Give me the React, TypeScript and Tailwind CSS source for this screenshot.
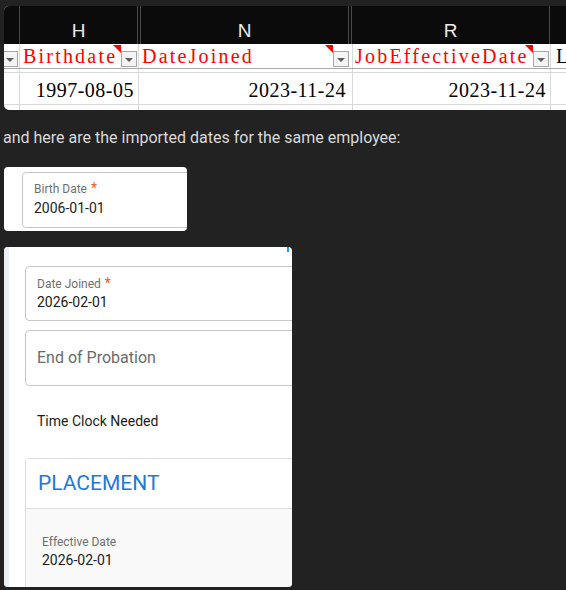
import React from "react";

function FilterBtn({ pos }: { pos: string }) {
  return (
    <div
      className={`absolute top-[7px] flex h-[16px] w-[16px] items-center justify-center border border-[#a6a6a6] bg-[#f4f4f4] ${pos}`}
    >
      <div className="mt-[1px] h-0 w-0 border-l-[4px] border-r-[4px] border-t-[4px] border-l-transparent border-r-transparent border-t-[#5f5f5f]" />
    </div>
  );
}

function RedMark({ pos }: { pos: string }) {
  return (
    <div
      className={`absolute top-[1px] h-[8px] w-[8px] bg-[#ff0000] [clip-path:polygon(0_0,100%_0,100%_100%)] ${pos}`}
    />
  );
}

function Sheet() {
  const serif = "font-['Liberation_Serif','Times_New_Roman',serif]";
  return (
    <div className="ml-[4px] h-[104px] w-[562px] overflow-hidden rounded-l-[5px] bg-white">
      {/* column letters */}
      <div className="flex h-[38px] bg-[#0b0b0b] font-['Liberation_Sans',Arial,sans-serif] text-[19px] leading-[20px] text-[#ececec]">
        <div className="w-[16px] shrink-0 border-r border-[#4a4a4a]" />
        <div className="w-[118px] shrink-0 border-r border-[#4a4a4a] pt-[15px] text-center">H</div>
        <div className="w-[3px] shrink-0 border-r border-[#4a4a4a]" />
        <div className="w-[208px] shrink-0 border-r border-[#4a4a4a] pt-[15px] text-center">N</div>
        <div className="w-[3px] shrink-0 border-r border-[#4a4a4a]" />
        <div className="w-[198px] shrink-0 border-r border-[#4a4a4a] pt-[15px] text-center">R</div>
        <div className="flex-1" />
      </div>
      {/* header names */}
      <div className={`flex h-[25px] border-b border-[#a8a8a8] ${serif} text-[20px] leading-[25px] tracking-[2.2px] text-[#ff0000]`}>
        <div className="relative w-[16px] shrink-0 border-r border-[#d9d9d9]">
          <FilterBtn pos="right-[1px]" />
        </div>
        <div className="relative w-[119px] shrink-0 border-r border-[#d9d9d9] whitespace-nowrap pl-[3px]">
          Birthdate
          <RedMark pos="right-[17px]" />
          <FilterBtn pos="right-[1px]" />
        </div>
        <div className="relative w-[214px] shrink-0 border-r border-[#d9d9d9] whitespace-nowrap pl-[3px]">
          DateJoined
          <RedMark pos="right-[19px]" />
          <FilterBtn pos="right-[3px]" />
        </div>
        <div className="relative w-[198px] shrink-0 border-r border-[#d9d9d9] whitespace-nowrap pl-[2px]">
          JobEffectiveDate
          <RedMark pos="right-[17px]" />
          <FilterBtn pos="right-[1px]" />
        </div>
        <div className="flex-1 whitespace-nowrap pl-[5px] text-black">L</div>
      </div>
      {/* spacer row */}
      <div className="flex h-[4px] border-b border-[#d9d9d9]">
        <div className="w-[16px] shrink-0 border-r border-[#d9d9d9]" />
        <div className="w-[119px] shrink-0 border-r border-[#d9d9d9]" />
        <div className="w-[214px] shrink-0 border-r border-[#d9d9d9]" />
        <div className="w-[198px] shrink-0 border-r border-[#d9d9d9]" />
      </div>
      {/* data row */}
      <div className={`flex h-[32px] border-b border-[#d9d9d9] ${serif} text-[20px] leading-[30px] tracking-[0.5px] text-black`}>
        <div className="w-[16px] shrink-0 border-r border-[#d9d9d9]" />
        <div className="w-[119px] shrink-0 border-r border-[#d9d9d9] pr-[4px] pt-[2px] text-right">1997-08-05</div>
        <div className="w-[214px] shrink-0 border-r border-[#d9d9d9] pr-[6px] pt-[2px] text-right">2023-11-24</div>
        <div className="w-[198px] shrink-0 border-r border-[#d9d9d9] pr-[4px] pt-[2px] text-right">2023-11-24</div>
        <div className="flex-1" />
      </div>
      <div className="flex h-[5px]">
        <div className="w-[16px] shrink-0 border-r border-[#d9d9d9]" />
        <div className="w-[119px] shrink-0 border-r border-[#d9d9d9]" />
        <div className="w-[214px] shrink-0 border-r border-[#d9d9d9]" />
        <div className="w-[198px] shrink-0 border-r border-[#d9d9d9]" />
      </div>
    </div>
  );
}

function Star() {
  return <span className="ml-[4px] text-[14px] text-[#ef5a1c]">*</span>;
}

function FilledInput({ label, value, required }: { label: string; value: string; required?: boolean }) {
  return (
    <div className="h-[56px] w-[320px] rounded-[4px] border border-[#c6c6c6] bg-white pl-[11px] pt-[7px]">
      <div className="text-[12px] leading-[16px] text-[#6f6f6f]">
        {label}
        {required && <Star />}
      </div>
      <div className="mt-[1px] text-[14px] leading-[20px] text-[#222222]">{value}</div>
    </div>
  );
}

export default function App() {
  return (
    <div className="min-h-[590px] bg-[#222222] pt-[6px] font-['Roboto',sans-serif]">
      <Sheet />
      <p className="ml-[3px] mt-[18px] text-[16px] leading-[20px] text-[#d9d9d9]">
        and here are the imported dates for the same employee:
      </p>

      {/* Birth date card */}
      <div className="ml-[4px] mt-[19px] h-[64px] w-[183px] overflow-hidden rounded-[4px] bg-white pl-[18px] pt-[5px]">
        <FilledInput label="Birth Date" value="2006-01-01" required />
      </div>

      {/* Second card */}
      <div className="relative ml-[4px] mt-[16px] flex h-[340px] w-[288px] overflow-hidden rounded-[4px] bg-white">
        <div className="w-[5px] shrink-0 bg-[#eceff3]" />
        <div className="w-[330px] shrink-0 pl-[16px] pt-[19px]">
          <div className="h-[55px] w-[320px] rounded-[4px] border border-[#c6c6c6] bg-white pl-[11px] pt-[8px]">
            <div className="text-[12px] leading-[16px] text-[#6f6f6f]">
              Date Joined
              <Star />
            </div>
            <div className="text-[14px] leading-[20px] text-[#1a1a1a]">2026-02-01</div>
          </div>
          <div className="mt-[9px] flex h-[56px] w-[320px] items-center rounded-[4px] border border-[#c6c6c6] pl-[11px] text-[16px] leading-[20px] text-[#6b6b6b]">
            End of Probation
          </div>
          <div className="mt-[25px] pl-[12px] text-[14px] leading-[20px] text-[#1c1c1c]">Time Clock Needed</div>
          <div className="mt-[27px] w-[320px] overflow-hidden rounded-[4px] border border-[#dedede]">
            <div className="h-[50px] border-b border-[#dedede] bg-white pl-[12px] pt-[10px] text-[21px] leading-[28px] text-[#2079d6]">
              PLACEMENT
            </div>
            <div className="h-[100px] bg-[#f9f9f9] pl-[16px] pt-[25px]">
              <div className="text-[12px] leading-[16px] text-[#6f6f6f]">Effective Date</div>
              <div className="text-[14px] leading-[20px] text-[#1c1c1c]">2026-02-01</div>
            </div>
          </div>
        </div>
        <div className="absolute right-[3px] top-0 h-[5px] w-[2px] bg-[#2196f3]" />
      </div>
    </div>
  );
}
